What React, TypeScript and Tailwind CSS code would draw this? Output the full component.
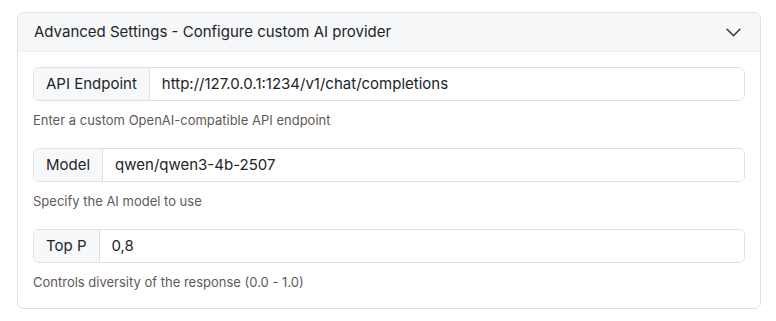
const fields = [
  { label: 'API Endpoint', value: 'http://127.0.0.1:1234/v1/chat/completions', help: 'Enter a custom OpenAI-compatible API endpoint' },
  { label: 'Model', value: 'qwen/qwen3-4b-2507', help: 'Specify the AI model to use' },
  { label: 'Top P', value: '0,8', help: 'Controls diversity of the response (0.0 - 1.0)' },
]

function Chevron() {
  return (
    <svg width="17" height="17" viewBox="0 0 16 16" fill="#2b2420" stroke="#2b2420" strokeWidth="0.4">
      <path d="M1.646 4.646a.5.5 0 0 1 .708 0L8 10.293l5.646-5.647a.5.5 0 0 1 .708.708l-6 6a.5.5 0 0 1-.708 0l-6-6a.5.5 0 0 1 0-.708z" />
    </svg>
  )
}

export default function App() {
  return (
    <div className="w-[776px] h-[321px] bg-white pl-[17px] pt-[12px] font-['Inter',sans-serif] text-[#212529]">
      <div className="w-[744px] rounded-md border border-[#dee2e6] overflow-hidden">
        {/* Accordion header */}
        <div className="flex items-center justify-between h-[39px] bg-[#f6f7f9] pl-4 pr-[18px] border-b border-[#eef0f2]">
          <span className="text-[15px]">Advanced Settings - Configure custom AI provider</span>
          <Chevron />
        </div>

        {/* Body */}
        <div className="px-[15px] pt-[15px] pb-[16px]">
          {fields.map((f, i) => (
            <div key={f.label} className={i < fields.length - 1 ? 'mb-[18px]' : ''}>
              <div className="flex h-[34px] rounded-md border border-[#dee2e6] overflow-hidden text-[15px]">
                <div className="flex items-center px-3 bg-[#f7f8fa] border-r border-[#dee2e6] whitespace-nowrap">
                  {f.label}
                </div>
                <div className="flex items-center flex-1 px-3 bg-white">{f.value}</div>
              </div>
              <div className="mt-[9px] text-[13px] leading-5 text-[#5f5a57]">{f.help}</div>
            </div>
          ))}
        </div>
      </div>
    </div>
  )
}
